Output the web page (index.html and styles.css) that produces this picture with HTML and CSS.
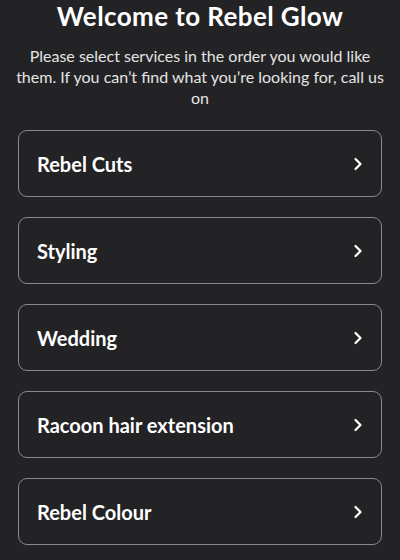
FILE: index.html
```html
<!DOCTYPE html>
<html lang="en">
<head>
    <meta charset="UTF-8">
    <meta name="viewport" content="width=device-width, initial-scale=1.0">
    <title>Rebel Glow - Services</title>
    <link rel="stylesheet" href="styles.css">
</head>
<body>
    <div class="container">
        <h1>Welcome to Rebel Glow</h1>
        <p class="intro">Please select services in the order you would like them. If you can’t find what you’re looking for, call us on</p>

        <div class="service-list">
            <a href="#" class="service">
                <span>Rebel Cuts</span>
                <svg class="chev" width="10" height="14" viewBox="0 0 10 14"><path d="M2.5 2 L7.5 7 L2.5 12" /></svg>
            </a>
            <a href="#" class="service">
                <span>Styling</span>
                <svg class="chev" width="10" height="14" viewBox="0 0 10 14"><path d="M2.5 2 L7.5 7 L2.5 12" /></svg>
            </a>
            <a href="#" class="service">
                <span>Wedding</span>
                <svg class="chev" width="10" height="14" viewBox="0 0 10 14"><path d="M2.5 2 L7.5 7 L2.5 12" /></svg>
            </a>
            <a href="#" class="service">
                <span>Racoon hair extension</span>
                <svg class="chev" width="10" height="14" viewBox="0 0 10 14"><path d="M2.5 2 L7.5 7 L2.5 12" /></svg>
            </a>
            <a href="#" class="service">
                <span>Rebel Colour</span>
                <svg class="chev" width="10" height="14" viewBox="0 0 10 14"><path d="M2.5 2 L7.5 7 L2.5 12" /></svg>
            </a>
        </div>
    </div>
</body>
</html>
```
FILE: styles.css
```css
body { font-family: 'Lato', 'Open Sans', sans-serif; background-color: #232326; color: #fff; margin: 0; padding: 0; }
.container { padding: 2px 18px 0; }
h1 { margin: 0; font-size: 26px; font-weight: 700; letter-spacing: 0.4px; text-align: center; line-height: 28px; }
.intro { margin: 15px -7px 0; font-size: 16px; line-height: 21px; text-align: center; color: #e3e3e3; }
.service-list { display: flex; flex-direction: column; gap: 20px; margin-top: 22px; }
.service { display: flex; justify-content: space-between; align-items: center; height: 67px; padding: 0 18px; border: 1.5px solid #8a8a8d; border-radius: 9px; box-sizing: border-box; color: #fff; text-decoration: none; font-size: 20px; font-weight: 700; }
.chev path { fill: none; stroke: #fff; stroke-width: 2.2; stroke-linecap: round; stroke-linejoin: round; }
```
